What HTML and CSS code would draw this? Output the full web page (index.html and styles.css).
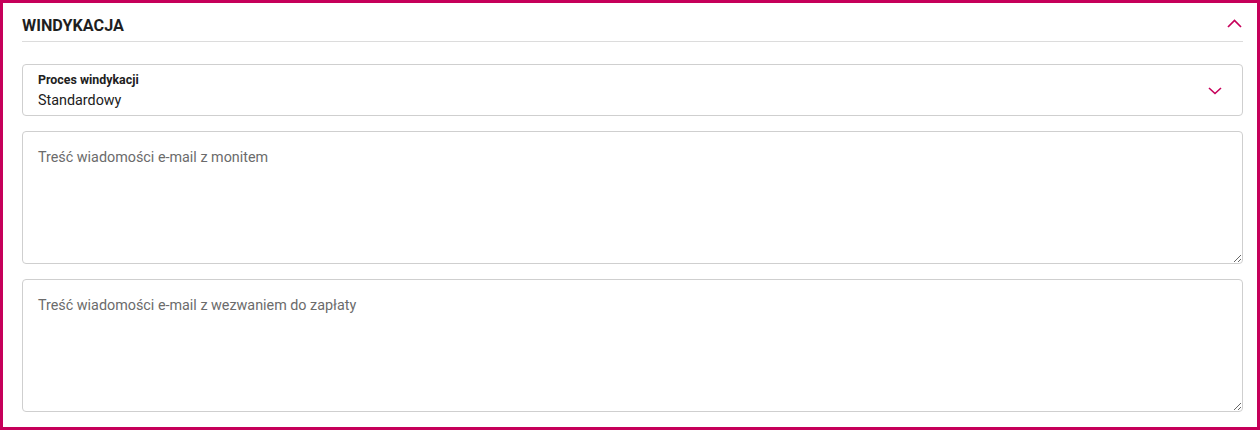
FILE: index.html
```html
<!DOCTYPE html>
<html lang="pl">
<head>
<meta charset="utf-8">
<link rel="stylesheet" href="styles.css">
</head>
<body>
<div class="frame">
  <div class="section-head">
    <h2 class="section-title">WINDYKACJA</h2>
    <svg class="chev-up" width="15" height="9" viewBox="0 0 15 9"><path d="M1 8 L7.5 1.5 L14 8" fill="none" stroke="#c6005a" stroke-width="1.7"/></svg>
  </div>
  <div class="fields">
    <div class="select">
      <div class="select-text">
        <div class="select-label">Proces windykacji</div>
        <div class="select-value">Standardowy</div>
      </div>
      <svg class="chev-down" width="14" height="8" viewBox="0 0 14 8"><path d="M1 1 L7 6.5 L13 1" fill="none" stroke="#c6005a" stroke-width="1.6"/></svg>
    </div>
    <textarea class="area" placeholder="Treść wiadomości e-mail z monitem"></textarea>
    <textarea class="area" placeholder="Treść wiadomości e-mail z wezwaniem do zapłaty"></textarea>
  </div>
</div>
</body>
</html>
```

FILE: styles.css
```css
html, body {
  margin: 0;
  padding: 0;
  background: #fff;
}
.frame {
  box-sizing: border-box;
  width: 1260px;
  height: 430px;
  border: 3px solid #c6005a;
  padding: 0 14px 0 19px;
  font-family: Roboto, "Liberation Sans", sans-serif;
  color: #212121;
}
.section-head {
  display: flex;
  align-items: center;
  justify-content: space-between;
  height: 38px;
  border-bottom: 1px solid #dcdcdc;
  padding-right: 1px;
}
.section-title {
  margin: 0;
  padding-top: 6px;
  font-size: 16.2px;
  font-weight: 700;
  color: #1f1f1f;
}
.chev-up {
  margin-top: 3px;
}
.fields {
  display: flex;
  flex-direction: column;
  gap: 15px;
  padding-top: 22px;
}
.select {
  box-sizing: border-box;
  height: 52px;
  border: 1px solid #cfcfcf;
  border-radius: 4px;
  display: flex;
  align-items: center;
  justify-content: space-between;
  padding: 3px 20px 0 15px;
}
.select-text {
  display: flex;
  flex-direction: column;
}
.select-label {
  font-size: 12.4px;
  font-weight: 700;
  line-height: 16px;
  color: #212121;
}
.select-value {
  margin-top: 3px;
  font-size: 14.35px;
  line-height: 20px;
  color: #212121;
}
.chev-down {
  margin-top: -2px;
}
.area {
  box-sizing: border-box;
  display: block;
  width: 100%;
  height: 133px;
  margin: 0;
  border: 1px solid #cfcfcf;
  border-radius: 4px;
  padding: 16px 15px 14px;
  font-family: Roboto, "Liberation Sans", sans-serif;
  font-size: 14.35px;
  line-height: 20px;
  color: #212121;
  background: #fff;
  outline: none;
}
.area::placeholder {
  color: #6b6b6b;
  opacity: 1;
}
```
